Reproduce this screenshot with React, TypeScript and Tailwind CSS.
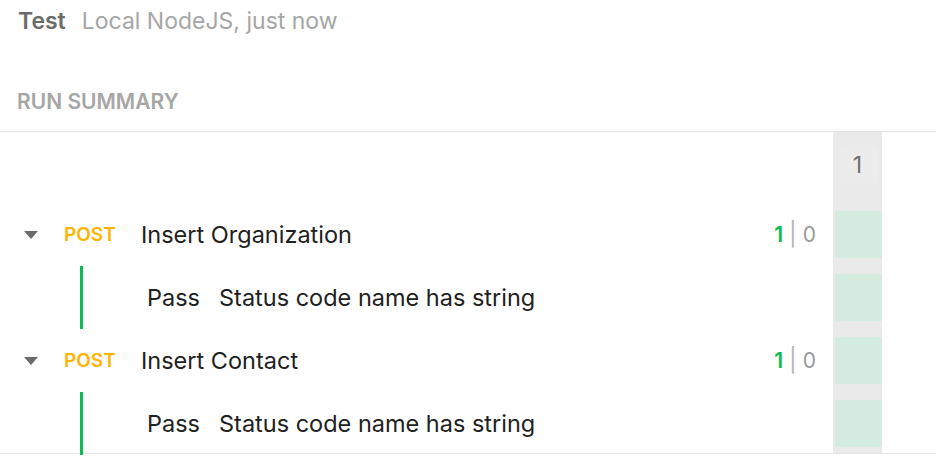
import React from "react";

type Test = { name: string; result: string };
type Req = { method: string; name: string; pass: number; fail: number; tests: Test[] };

const requests: Req[] = [
  { method: "POST", name: "Insert Organization", pass: 1, fail: 0, tests: [{ name: "Status code name has string", result: "Pass" }] },
  { method: "POST", name: "Insert Contact", pass: 1, fail: 0, tests: [{ name: "Status code name has string", result: "Pass" }] },
];

function Caret() {
  return (
    <svg width="14" height="8" viewBox="0 0 14 8" className="shrink-0">
      <path d="M0 0 H14 L7 8 Z" fill="#6b6b6b" />
    </svg>
  );
}

export default function App() {
  return (
    <div className="h-[461px] w-[936px] overflow-hidden bg-white font-['Inter',sans-serif]">
      {/* Header */}
      <div className="flex h-[60px] items-baseline gap-[16px] px-[18px] pt-[4px]">
        <span className="text-[23px] font-semibold text-[#6b6b6b]">Test</span>
        <span className="text-[23px] text-[#a6a6a6]">Local NodeJS, just now</span>
      </div>
      <div className="flex h-[71px] items-center px-[17px] pt-[13px] text-[21px] font-semibold text-[#a6a6a6]">RUN SUMMARY</div>

      {/* Summary */}
      <div className="flex h-[323px] border-y border-[#e6e6e6]">
        <div className="flex-1 pt-[79px] pr-[17px]">
          <div className="flex flex-col gap-[16px]">
            {requests.map((r, i) => (
              <React.Fragment key={i}>
                <div className="flex h-[47px] items-center">
                  <div className="w-[64px] pl-[24px]"><Caret /></div>
                  <span className="w-[77px] pt-[2px] text-[19px] font-semibold text-[#ffb400]">{r.method}</span>
                  <span className="flex-1 text-[23.5px] text-[#212121]">{r.name}</span>
                  <span className="text-[21px] font-semibold text-[#0cbb52]">{r.pass}</span>
                  <span className="mx-[6px] text-[23px] text-[#b3b3b3]">|</span>
                  <span className="text-[21px] text-[#9a9a9a]">{r.fail}</span>
                </div>
                {r.tests.map((t, j) => (
                  <div key={j} className="flex h-[47px] items-center">
                    <div className="ml-[80px] h-[63px] w-[3px] shrink-0 bg-[#0cbb52]" />
                    <span className="ml-[64px] w-[72px] text-[23.5px] text-[#212121]">{t.result}</span>
                    <span className="text-[23.5px] text-[#212121]">{t.name}</span>
                  </div>
                ))}
              </React.Fragment>
            ))}
          </div>
        </div>
        <div className="flex w-[49px] flex-col bg-[#eaeaea] pt-[13px]">
          <div className="mx-auto flex h-[40px] w-[40px] items-center justify-center rounded-md bg-[#ececec] text-[23px] text-[#707070]">1</div>
          <div className="mt-[26px] flex flex-col gap-[16px] pl-[2px]">
            {[0, 1, 2, 3].map((k) => (
              <div key={k} className="h-[47px] bg-[#d4ebdf]" />
            ))}
          </div>
        </div>
        <div className="w-[54px]" />
      </div>
    </div>
  );
}
